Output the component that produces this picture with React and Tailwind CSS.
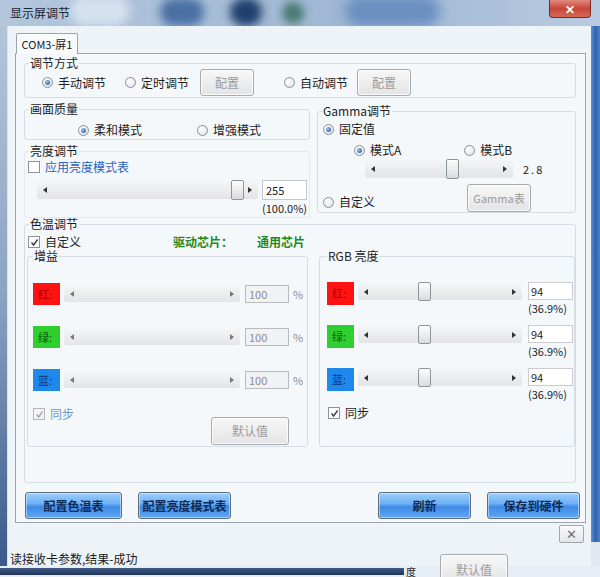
import React from "react";

function Arrow({ dir, color = "#333" }) {
  return (
    <svg width="4" height="6" viewBox="0 0 4 6">
      <path d={dir === "left" ? "M4 0 L0 3 L4 6 Z" : "M0 0 L4 3 L0 6 Z"} fill={color} />
    </svg>
  );
}

function Slider({ className, thumb, disabled }) {
  return (
    <div
      className={
        "relative flex items-center justify-between px-[6px] rounded-[2px] bg-[linear-gradient(to_bottom,#f4f5f6,#e2e4e7)] " +
        className
      }
    >
      <Arrow dir="left" color={disabled ? "#777" : "#333"} />
      <Arrow dir="right" color={disabled ? "#777" : "#333"} />
      {thumb !== undefined && (
        <div
          className="absolute top-[-1px] bottom-[-1px] w-[13px] rounded-[2px] border border-[#8d949b] bg-[linear-gradient(to_bottom,#fdfdfd,#d9dbde)]"
          style={{ left: thumb }}
        />
      )}
    </div>
  );
}

function Radio({ checked, label, className }) {
  return (
    <div className={"flex items-center gap-[5px] h-[14px] " + (className || "")}>
      <span className="w-[11px] h-[11px] rounded-full border border-[#8b9097] bg-[radial-gradient(circle_at_35%_35%,#ffffff,#d9dee4)] flex items-center justify-center">
        {checked && (
          <span className="w-[5px] h-[5px] rounded-full bg-[radial-gradient(circle_at_35%_35%,#9cc2ef,#1b4b90)]" />
        )}
      </span>
      <span className="leading-[14px]">{label}</span>
    </div>
  );
}

function Check({ checked, disabled, label, labelClass, className }) {
  return (
    <div className={"flex items-center gap-[5px] h-[12px] " + (className || "")}>
      <span
        className={
          "w-[12px] h-[12px] border flex items-center justify-center " +
          (disabled ? "border-[#b3b6ba] bg-[#f4f4f4]" : "border-[#8e9297] bg-white")
        }
      >
        {checked && (
          <svg width="9" height="9" viewBox="0 0 9 9">
            <path
              d="M1.5 4.5 L3.6 7 L7.6 1.5"
              fill="none"
              stroke={disabled ? "#a5a8ac" : "#3a3f46"}
              strokeWidth="1.4"
            />
          </svg>
        )}
      </span>
      <span className={"leading-[12px] " + (labelClass || "")}>{label}</span>
    </div>
  );
}

function Group({ label, className, legendClass, children }) {
  return (
    <fieldset className={"min-w-0 border border-[#d4dce4] rounded-[3px] " + className}>
      <legend className={"px-[1px] text-[12px] leading-[12px] " + (legendClass || "ml-[4px]")}>
        {label}
      </legend>
      {children}
    </fieldset>
  );
}

const greyBtn =
  "rounded-[3px] border border-[#a6abb0] bg-[linear-gradient(to_bottom,#f7f7f7,#e3e4e6)] text-[#9c9c9c] shadow-[inset_0_0_0_1px_#fbfbfb] flex items-center justify-center";

const blueBtn =
  "h-[27px] rounded-[3px] border border-[#5f6c7a] bg-[linear-gradient(to_bottom,#9dcdfa_0%,#6cb0f5_42%,#3f8be5_55%,#5ea8f3_100%)] text-[12px] font-bold text-[#0d2a55] shadow-[inset_0_0_0_1px_rgba(255,255,255,0.45)] flex items-center justify-center";

function GainRow({ color, text, name }) {
  return (
    <div className="flex items-center h-[22px]">
      <div className={"w-[27px] h-[22px] flex items-center pl-[5px] text-[11px] " + color + " " + text}>
        {name}
      </div>
      <Slider className="ml-[4px] w-[176px] h-[16px]" disabled />
      <div className="ml-[5px] w-[44px] h-[18px] border border-[#b8bcc1] bg-[#f1f2f3] text-[11px] leading-[16px] pl-[3px] text-[#8d8d8d]">
        100
      </div>
      <span className="ml-[4px] text-[11px] text-[#8d8d8d]">%</span>
    </div>
  );
}

function RgbRow({ color, text, name }) {
  return (
    <div className="flex items-start h-[23px]">
      <div className={"w-[27px] h-[23px] flex items-center pl-[5px] text-[11px] " + color + " " + text}>
        {name}
      </div>
      <Slider className="ml-[4px] mt-[1px] w-[164px] h-[17px]" thumb={60} />
      <div className="ml-[6px] flex flex-col">
        <div className="w-[45px] h-[18px] border border-[#c9cdd2] bg-white text-[11px] leading-[16px] pl-[2px]">
          94
        </div>
        <div className="mt-[3px] text-[11px] leading-[11px]">(36.9%)</div>
      </div>
    </div>
  );
}

export default function App() {
  return (
    <div className="relative w-[600px] h-[577px] overflow-hidden bg-[#e7edf4] text-[12px] text-[#1c1c1c] font-['Noto_Sans_CJK_SC','Noto_Sans',sans-serif]">
      {/* title bar */}
      <div className="relative h-[26px] overflow-hidden bg-[linear-gradient(to_right,#b3c6dc,#a9bfd8_30%,#9db6d3_60%,#b9cbe0)]">
        <div className="absolute left-[70px] top-[-4px] w-[60px] h-[30px] rounded-full bg-[#d4e1ee] blur-[5px]" />
        <div className="absolute left-[160px] top-[-2px] w-[44px] h-[28px] rounded-full bg-[#4a70a3] blur-[5px]" />
        <div className="absolute left-[230px] top-[-2px] w-[32px] h-[28px] rounded-full bg-[#203f6d] blur-[5px]" />
        <div className="absolute left-[282px] top-[2px] w-[22px] h-[22px] rounded-full bg-[#4a7a72] blur-[4px]" />
        <div className="absolute left-[345px] top-[-4px] w-[95px] h-[30px] rounded-full bg-[#6a8fc0] blur-[6px]" />
        <div className="relative pl-[10px] h-[26px] flex items-center text-[12px] text-[#1b2633]">显示屏调节</div>
        <div className="absolute left-[549px] top-0 w-[42px] h-[18px] rounded-b-[4px] border border-t-0 border-[#7a2a24] bg-[linear-gradient(to_bottom,#e28a7d,#c9473a_50%,#d5685a)] flex items-center justify-center text-white text-[12px] font-bold">
          ✕
        </div>
      </div>

      <div className="flex h-[540px]">
        {/* left frame */}
        <div className="w-[8px] bg-[linear-gradient(to_bottom,#b4c5d9,#8aa3c3_50%,#3b5a89)] border-r border-[#d9e2ec]" />

        {/* client */}
        <div className="w-[583px] bg-[#eef3f8] flex flex-col">
          <div className="pt-[7px] pl-[8px]">
            <div className="relative z-10 mb-[-1px] w-[62px] h-[21px] border border-b-0 border-[#9aa5b0] rounded-t-[2px] bg-[#f8fafc] text-[11px] flex items-center justify-center">
              COM3-屏1
            </div>
          </div>

          {/* tab panel */}
          <div className="ml-[7px] w-[571px] h-[470px] border border-[#9aa5b0] bg-[#f5f8fb] pl-[8px] pr-[9px] flex flex-col">
            {/* 调节方式 */}
            <Group label="调节方式" className="mt-[3px] h-[41px]">
              <div className="flex items-center h-[27px] pl-[17px]">
                <Radio checked label="手动调节" />
                <Radio label="定时调节" className="ml-[19px]" />
                <div className={greyBtn + " ml-[11px] w-[54px] h-[27px]"}>配置</div>
                <Radio label="自动调节" className="ml-[30px]" />
                <div className={greyBtn + " ml-[9px] w-[54px] h-[27px]"}>配置</div>
              </div>
            </Group>

            <div className="mt-[3px] flex gap-[7px]">
              <div className="w-[286px] flex flex-col">
                <Group label="画面质量" className="mt-[2px] h-[37px]">
                  <div className="mt-[8px] pl-[53px] flex">
                    <Radio checked label="柔和模式" />
                    <Radio label="增强模式" className="ml-[55px]" />
                  </div>
                </Group>
                <Group label="亮度调节" className="mt-[5px] h-[73px] border-[#e3e9ef]">
                  <Check label="应用亮度模式表" labelClass="text-[#2a62c2]" className="mt-[4px] ml-[3px]" />
                  <div className="mt-[7px] pl-[12px] flex items-center">
                    <Slider className="w-[221px] h-[18px]" thumb={194} />
                    <div className="ml-[4px] w-[45px] h-[20px] border border-[#c3c8ce] bg-white text-[11px] leading-[18px] pl-[3px]">
                      255
                    </div>
                  </div>
                  <div className="mt-[3px] ml-[237px] text-[11px] leading-[11px]">(100.0%)</div>
                </Group>
              </div>

              <Group label="Gamma调节" className="mt-[4px] w-[259px] h-[108px]" legendClass="ml-[4px] text-[11px]">
                <Radio checked label="固定值" className="mt-[5px] ml-[5px]" />
                <div className="mt-[7px] ml-[36px] flex">
                  <Radio checked label="模式A" />
                  <Radio label="模式B" className="ml-[63px]" />
                </div>
                <div className="mt-[3px] ml-[47px] flex items-center">
                  <Slider className="w-[148px] h-[18px]" thumb={81} />
                  <span className="ml-[10px] text-[11px] tracking-[2px]">2.8</span>
                </div>
                <div className="mt-[6px] h-[28px] flex justify-between pl-[5px] pr-[44px]">
                  <Radio label="自定义" className="mt-[11px]" />
                  <div className={greyBtn + " w-[64px] h-[28px] text-[11px]"}>Gamma表</div>
                </div>
              </Group>
            </div>

            {/* 色温调节 */}
            <Group label="色温调节" className="h-[265px]">
              <div className="mt-[6px] flex items-center h-[12px]">
                <div className="w-[148px] pl-[3px]">
                  <Check checked label="自定义" />
                </div>
                <span className="w-[84px] font-bold leading-[12px] text-[#1f8a1f]">驱动芯片：</span>
                <span className="font-bold leading-[12px] text-[#1f8a1f]">通用芯片</span>
              </div>
              <div className="mt-[2px] flex">
                <Group label="增益" className="ml-[2px] w-[281px] h-[197px]" legendClass="ml-[5px]">
                  <div className="pl-[5px]">
                    <div className="mt-[21px] flex flex-col gap-[21px]">
                      <GainRow color="bg-[#ff1212]" text="text-[#a30000]" name="红:" />
                      <GainRow color="bg-[#2fcf2f]" text="text-[#0b5f0b]" name="绿:" />
                      <GainRow color="bg-[#1e88ec]" text="text-[#0a3a7c]" name="蓝:" />
                    </div>
                    <div className="mt-[17px] pr-[18px] flex justify-between items-start">
                      <Check checked disabled label="同步" labelClass="text-[#6f96c9]" />
                      <div className={greyBtn + " mt-[9px] w-[78px] h-[28px]"}>默认值</div>
                    </div>
                  </div>
                </Group>
                <Group label="RGB 亮度" className="ml-[11px] w-[256px] h-[197px]" legendClass="ml-[7px]">
                  <div className="pl-[7px]">
                    <div className="mt-[20px] flex flex-col gap-[20px]">
                      <RgbRow color="bg-[#ff1212]" text="text-[#a30000]" name="红:" />
                      <RgbRow color="bg-[#2fcf2f]" text="text-[#0b5f0b]" name="绿:" />
                      <RgbRow color="bg-[#1e88ec]" text="text-[#0a3a7c]" name="蓝:" />
                    </div>
                    <Check checked label="同步" className="mt-[16px] ml-[1px]" />
                  </div>
                </Group>
              </div>
            </Group>

            {/* bottom buttons */}
            <div className="mt-[9px] ml-[1px] mr-[-4px] flex justify-between">
              <div className="flex gap-[16px]">
                <div className={blueBtn + " w-[97px]"}>配置色温表</div>
                <div className={blueBtn + " w-[93px]"}>配置亮度模式表</div>
              </div>
              <div className="flex gap-[16px]">
                <div className={blueBtn + " w-[93px]"}>刷新</div>
                <div className={blueBtn + " w-[93px]"}>保存到硬件</div>
              </div>
            </div>
          </div>

          {/* below panel */}
          <div className="mt-[2px] self-end mr-[7px] w-[25px] h-[18px] border border-[#9ea6ae] rounded-[2px] bg-[linear-gradient(to_bottom,#fafafa,#e4e6e8)] flex items-center justify-center text-[13px] text-[#6d7277]">
            ✕
          </div>
          <div className="mt-[10px] pl-[2px] text-[12px] leading-[12px] text-[#1a1a1a]">读接收卡参数,结果-成功</div>
        </div>

        {/* right frame */}
        <div className="w-[9px] flex flex-col">
          <div className="h-[516px] bg-[linear-gradient(to_right,#5a8ed6,#2f63ad_50%,#4d82cc)]" />
          <div className="flex-1 bg-[#e2e8ef]" />
        </div>
      </div>

      {/* bottom strip */}
      <div className="h-[11px] flex items-center">
        <div className="w-[404px] h-[7px] bg-[linear-gradient(to_bottom,#3f5c88,#1f3357)]" />
        <span className="ml-[2px] text-[10px] leading-[10px]">度</span>
      </div>

      {/* underlying window button peeking through */}
      <div className={greyBtn + " absolute left-[440px] top-[554px] w-[68px] h-[30px] items-start pt-[6px]"}>默认值</div>
    </div>
  );
}
